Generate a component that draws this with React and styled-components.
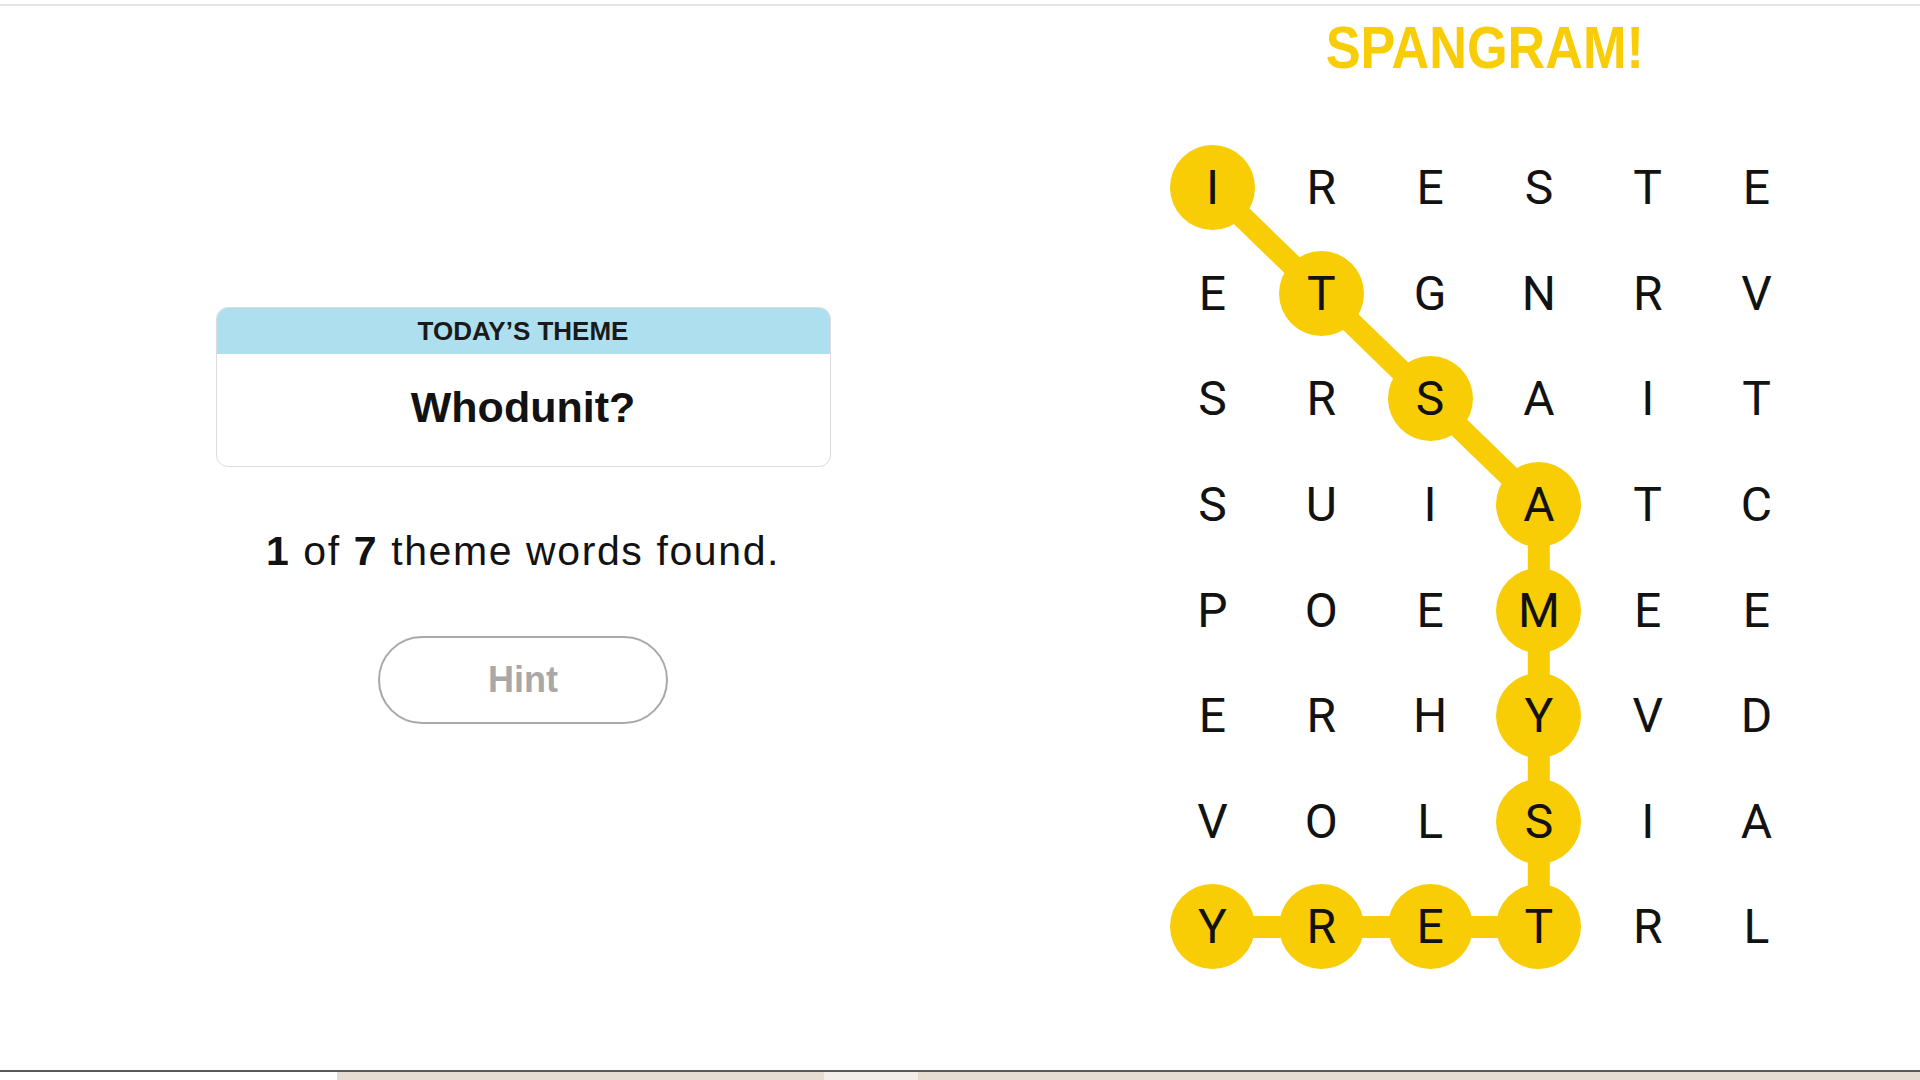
import React from 'react';
import styled, { createGlobalStyle } from 'styled-components';

const COL = 108.8;
const ROW = 105.6;

const LETTERS = [
    'IRESTE',
    'ETGNRV',
    'SRSAIT',
    'SUIATC',
    'POEMEE',
    'ERHYVD',
    'VOLSIA',
    'YRETRL',
];

// spangram path, [col, row]
const SPANGRAM = [
    [0, 0], [1, 1], [2, 2], [3, 3], [3, 4], [3, 5], [3, 6], [3, 7], [2, 7], [1, 7], [0, 7],
];

const GlobalStyle = createGlobalStyle`
    html, body {
        margin: 0;
        padding: 0;
        background: #fff;
    }
    body {
        font-family: "Liberation Sans", Arial, sans-serif;
        color: #121212;
    }
`;

const Page = styled.div`
    box-sizing: border-box;
    display: flex;
    flex-direction: column;
    height: 1080px;
    overflow: hidden;
    padding-top: 4px;
    width: 1920px;
`;

const Main = styled.main`
    border-top: 2px solid #e4e4e4;
    display: flex;
    flex: 1;
`;

const LeftPanel = styled.section`
    align-items: center;
    box-sizing: border-box;
    display: flex;
    flex-direction: column;
    padding-top: 301px;
    width: 1046px;
`;

const ThemeCard = styled.div`
    border: 1px solid #dcdcdc;
    border-radius: 12px;
    box-sizing: border-box;
    overflow: hidden;
    width: 615px;
`;

const ThemeHeader = styled.div`
    align-items: center;
    background-color: #aedfee;
    color: #1a1a1a;
    display: flex;
    font-size: 26px;
    font-weight: 700;
    height: 46px;
    justify-content: center;
`;

const ThemeBody = styled.div`
    align-items: center;
    box-sizing: border-box;
    display: flex;
    font-size: 43px;
    font-weight: 700;
    height: 112px;
    justify-content: center;
    padding-bottom: 6px;
`;

const Progress = styled.p`
    font-size: 41px;
    letter-spacing: 1.6px;
    line-height: 46px;
    margin: 61px 0 0;
    b {
        font-weight: 700;
    }
`;

const HintButton = styled.button`
    background: #fff;
    border: 2px solid #a9a9a9;
    border-radius: 44px;
    color: #a8a8a8;
    font-family: inherit;
    font-size: 36px;
    font-weight: 700;
    height: 88px;
    margin-top: 62px;
    width: 290px;
`;

const RightPanel = styled.section`
    align-items: center;
    box-sizing: border-box;
    display: flex;
    flex: 1;
    flex-direction: column;
    padding: 12px 0 0 3px;
`;

const Title = styled.h1`
    color: #f8cd05;
    font-size: 60px;
    font-weight: 700;
    line-height: 60px;
    margin: 0;
    transform: scaleX(0.87);
`;

const Board = styled.div`
    display: grid;
    grid-auto-rows: ${ROW}px;
    grid-template-columns: repeat(6, ${COL}px);
    margin-top: 57px;
    position: relative;
`;

const Connectors = styled.svg`
    left: 0;
    position: absolute;
    top: 0;
`;

const Cell = styled.div`
    align-items: center;
    display: flex;
    justify-content: center;
    position: relative;
`;

const Letter = styled.span`
    align-items: center;
    background-color: ${props => props.$selected ? '#f8cd05' : 'transparent'};
    border-radius: 50%;
    color: #121212;
    display: flex;
    font-family: Roboto, "Liberation Sans", sans-serif;
    font-size: 48px;
    font-weight: 400;
    height: 85px;
    justify-content: center;
    width: 85px;
`;

const Footer = styled.footer`
    border-top: 2px solid #585858;
    display: flex;
    height: 8px;
`;

const FooterPart = styled.div`
    background-color: ${props => props.$color};
    flex: ${props => props.$grow ? 1 : 'none'};
    width: ${props => props.$width ? `${props.$width}px` : 'auto'};
`;

const isSelected = (c, r) => SPANGRAM.some(([sc, sr]) => sc === c && sr === r);

export default function App () {
    const points = SPANGRAM
        .map(([c, r]) => `${c * COL + COL / 2},${r * ROW + ROW / 2}`)
        .join(' ');

    return (
        <Page>
            <GlobalStyle />
            <Main>
                <LeftPanel>
                    <ThemeCard>
                        <ThemeHeader>TODAY’S THEME</ThemeHeader>
                        <ThemeBody>Whodunit?</ThemeBody>
                    </ThemeCard>
                    <Progress>
                        <b>1</b> of <b>7</b> theme words found.
                    </Progress>
                    <HintButton>Hint</HintButton>
                </LeftPanel>
                <RightPanel>
                    <Title>SPANGRAM!</Title>
                    <Board>
                        <Connectors width={COL * 6} height={ROW * 8}>
                            <polyline
                                points={points}
                                fill="none"
                                stroke="#f8cd05"
                                strokeWidth="22"
                                strokeLinejoin="round"
                            />
                        </Connectors>
                        {LETTERS.map((row, r) =>
                            row.split('').map((ch, c) => (
                                <Cell key={`${r}-${c}`}>
                                    <Letter $selected={isSelected(c, r)}>{ch}</Letter>
                                </Cell>
                            ))
                        )}
                    </Board>
                </RightPanel>
            </Main>
            <Footer>
                <FooterPart $width={337} $color="#fff" />
                <FooterPart $width={487} $color="#e6dcd2" />
                <FooterPart $width={94} $color="#f3eeea" />
                <FooterPart $grow $color="#e6dcd2" />
            </Footer>
        </Page>
    );
}
